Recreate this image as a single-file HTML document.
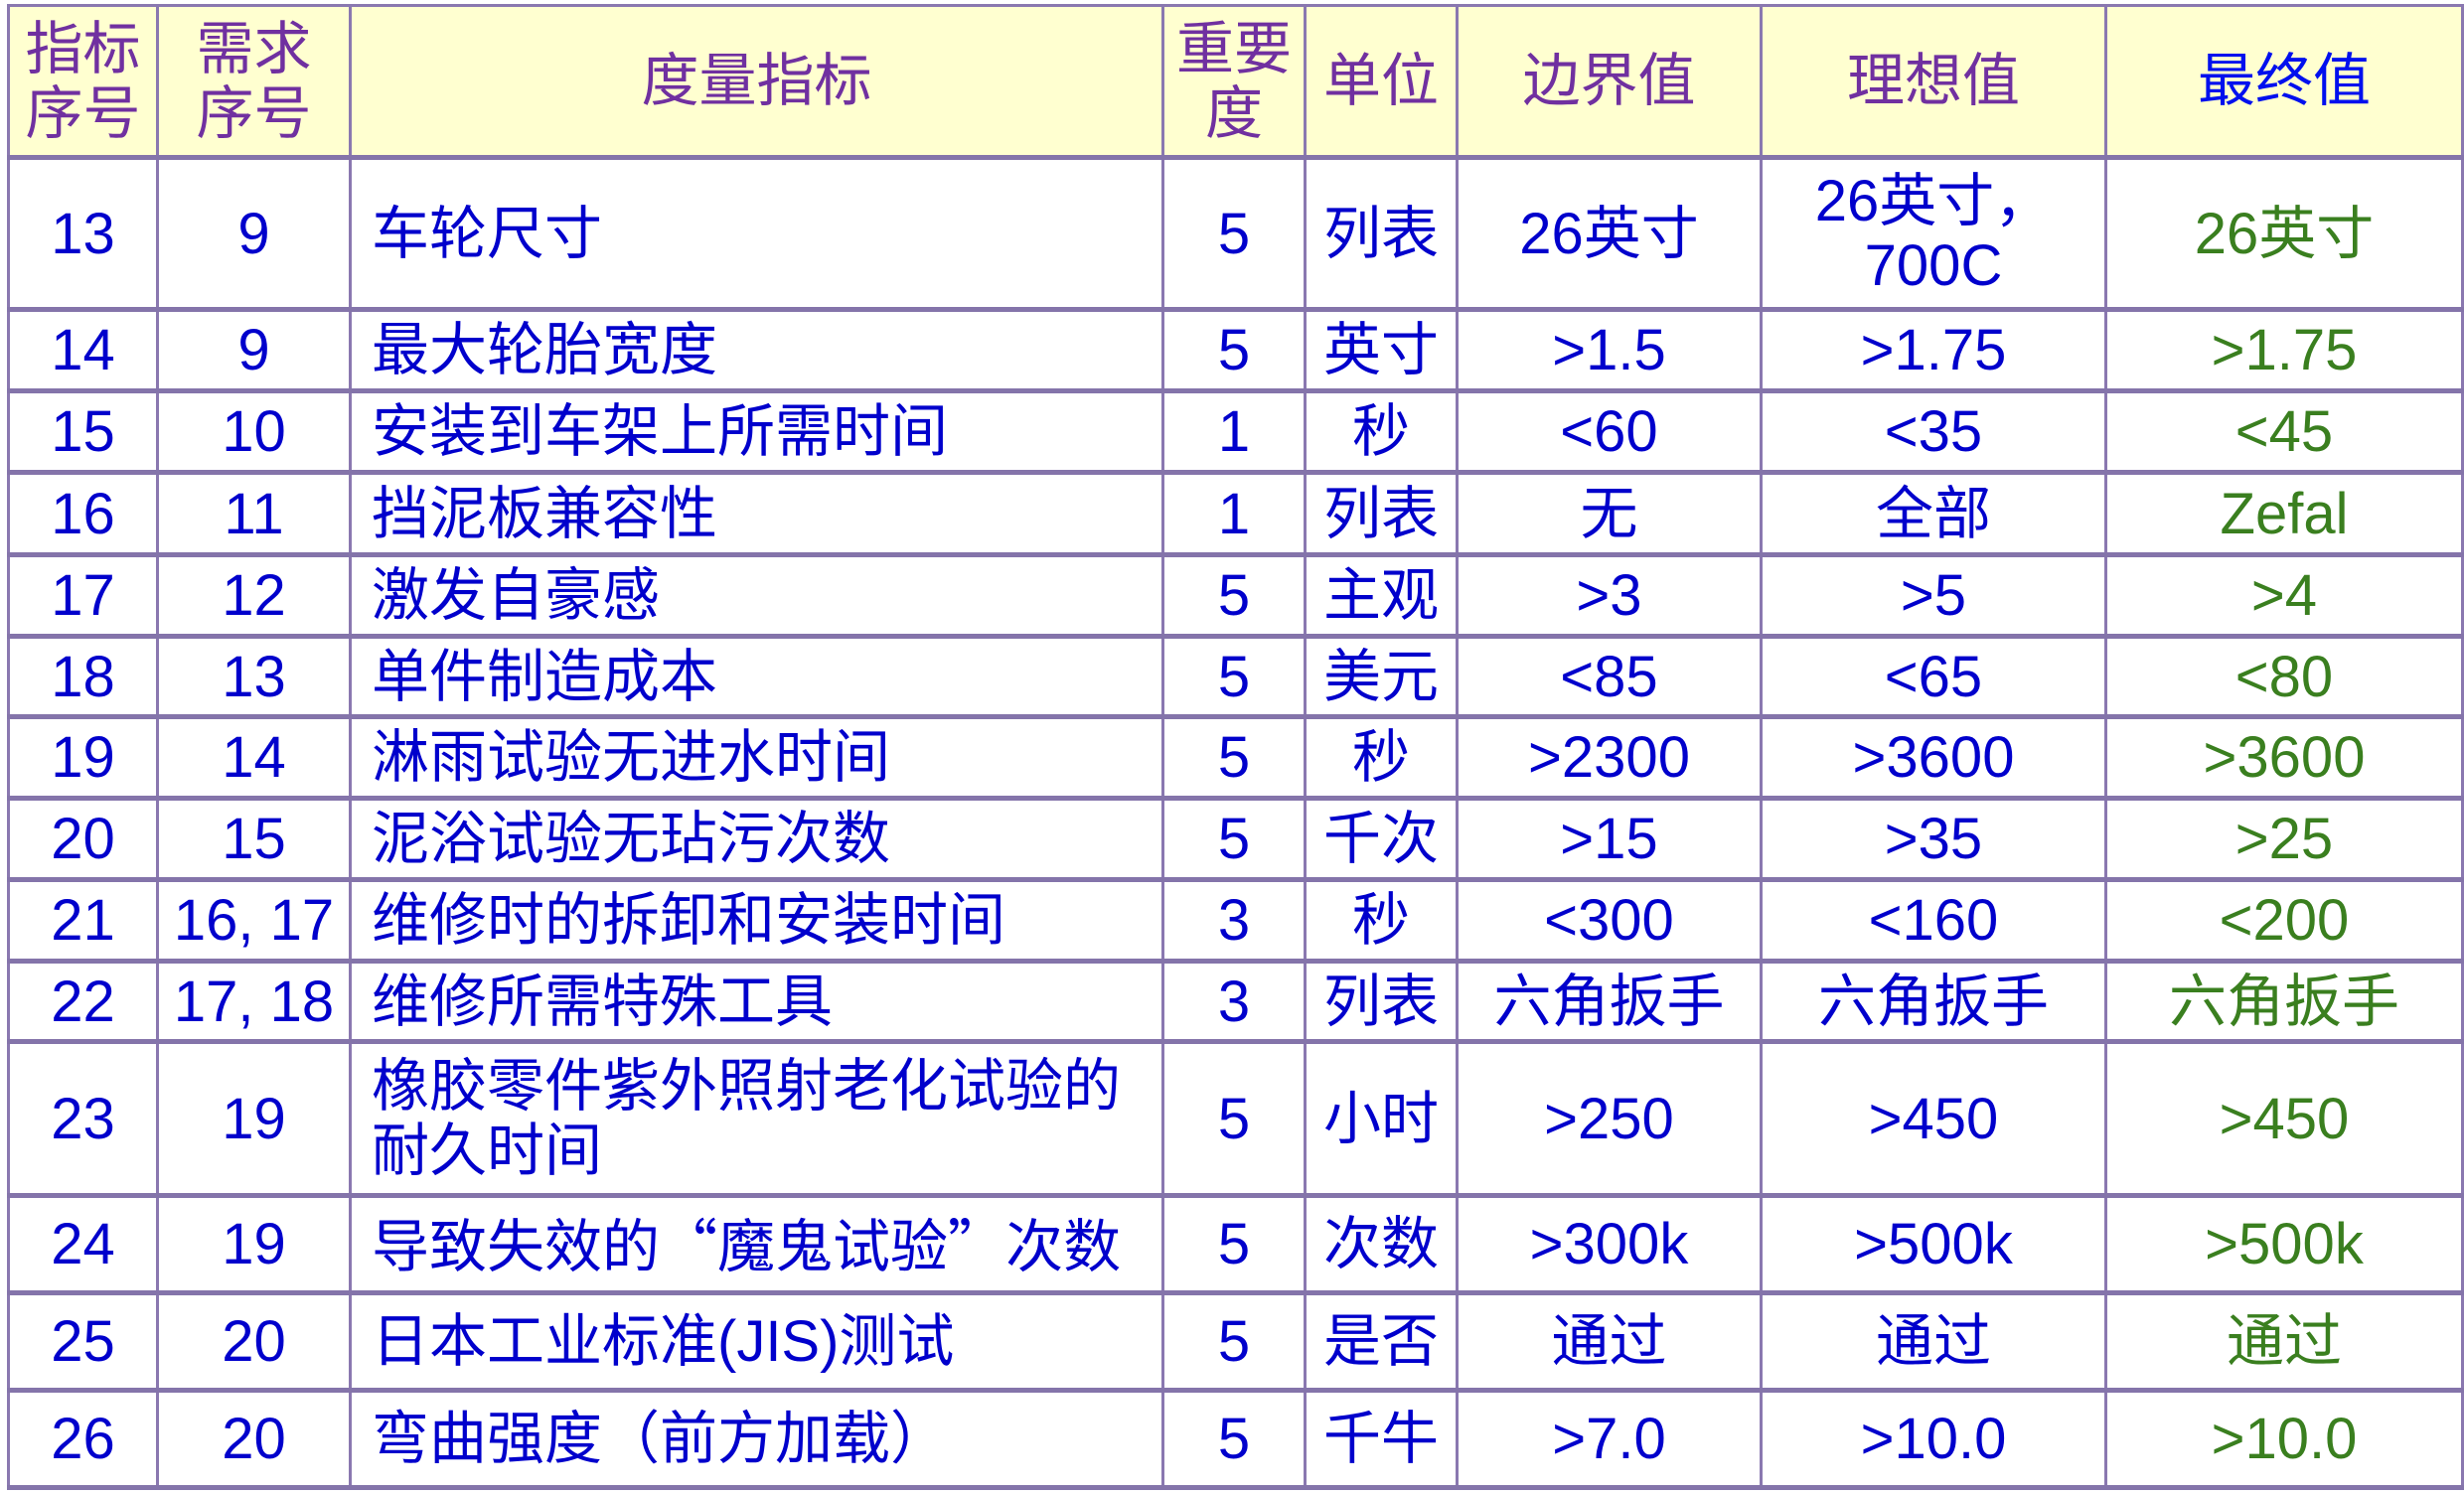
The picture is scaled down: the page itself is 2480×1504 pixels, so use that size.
<!DOCTYPE html>
<html><head><meta charset="utf-8"><style>
html,body{margin:0;padding:0;background:#fff;width:2480px;height:1504px;overflow:hidden}
table{position:absolute;left:7px;top:4px;border-collapse:collapse;table-layout:fixed;width:2470px}
td{border:3px solid #8a78b0;padding:0;text-align:center;vertical-align:middle;font-family:"Liberation Sans","Noto Sans CJK SC",sans-serif;font-size:58px;line-height:65px;color:#0000cc;overflow:hidden;white-space:nowrap}
tr{border-bottom:5px solid #8474aa}
thead td{background:#ffffd0;color:#7030a0}
td.l{text-align:left;padding-left:20px}
td.g{color:#3a7f1f}
thead td.b{color:#0010ee}
.q{font-family:"Noto Sans CJK SC",sans-serif}
</style></head><body>
<table>
<colgroup><col style="width:150px"><col style="width:194px"><col style="width:818px"><col style="width:143px"><col style="width:153px"><col style="width:306px"><col style="width:347px"><col style="width:359px"></colgroup>
<thead><tr style="height:153px"><td>指标<br>序号</td><td>需求<br>序号</td><td>度量指标</td><td>重要<br>度</td><td>单位</td><td>边界值</td><td>理想值</td><td class="b">最终值</td></tr></thead>
<tbody>
<tr style="height:153px"><td>13</td><td>9</td><td class="l">车轮尺寸</td><td>5</td><td>列表</td><td>26英寸</td><td>26英寸，<br>700C</td><td class="g">26英寸</td></tr>
<tr style="height:82px"><td>14</td><td>9</td><td class="l">最大轮胎宽度</td><td>5</td><td>英寸</td><td>&gt;1.5</td><td>&gt;1.75</td><td class="g">&gt;1.75</td></tr>
<tr style="height:82px"><td>15</td><td>10</td><td class="l">安装到车架上所需时间</td><td>1</td><td>秒</td><td>&lt;60</td><td>&lt;35</td><td class="g">&lt;45</td></tr>
<tr style="height:83px"><td>16</td><td>11</td><td class="l">挡泥板兼容性</td><td>1</td><td>列表</td><td>无</td><td>全部</td><td class="g">Zefal</td></tr>
<tr style="height:82px"><td>17</td><td>12</td><td class="l">激发自豪感</td><td>5</td><td>主观</td><td>&gt;3</td><td>&gt;5</td><td class="g">&gt;4</td></tr>
<tr style="height:81px"><td>18</td><td>13</td><td class="l">单件制造成本</td><td>5</td><td>美元</td><td>&lt;85</td><td>&lt;65</td><td class="g">&lt;80</td></tr>
<tr style="height:82px"><td>19</td><td>14</td><td class="l">淋雨试验无进水时间</td><td>5</td><td>秒</td><td>&gt;2300</td><td>&gt;3600</td><td class="g">&gt;3600</td></tr>
<tr style="height:82px"><td>20</td><td>15</td><td class="l">泥浴试验无玷污次数</td><td>5</td><td>千次</td><td>&gt;15</td><td>&gt;35</td><td class="g">&gt;25</td></tr>
<tr style="height:82px"><td>21</td><td>16, 17</td><td class="l">维修时的拆卸和安装时间</td><td>3</td><td>秒</td><td>&lt;300</td><td>&lt;160</td><td class="g">&lt;200</td></tr>
<tr style="height:81px"><td>22</td><td>17, 18</td><td class="l">维修所需特殊工具</td><td>3</td><td>列表</td><td>六角扳手</td><td>六角扳手</td><td class="g">六角扳手</td></tr>
<tr style="height:155px"><td>23</td><td>19</td><td class="l">橡胶零件紫外照射老化试验的<br>耐久时间</td><td>5</td><td>小时</td><td>&gt;250</td><td>&gt;450</td><td class="g">&gt;450</td></tr>
<tr style="height:98px"><td>24</td><td>19</td><td class="l">导致失效的<span class="q">“</span>魔鬼试验<span class="q">”</span>次数</td><td>5</td><td>次数</td><td>&gt;300k</td><td>&gt;500k</td><td class="g">&gt;500k</td></tr>
<tr style="height:98px"><td>25</td><td>20</td><td class="l">日本工业标准(JIS)测试</td><td>5</td><td>是否</td><td>通过</td><td>通过</td><td class="g">通过</td></tr>
<tr style="height:98px"><td>26</td><td>20</td><td class="l">弯曲强度（前方加载）</td><td>5</td><td>千牛</td><td>&gt;7.0</td><td>&gt;10.0</td><td class="g">&gt;10.0</td></tr>
</tbody></table>
</body></html>
